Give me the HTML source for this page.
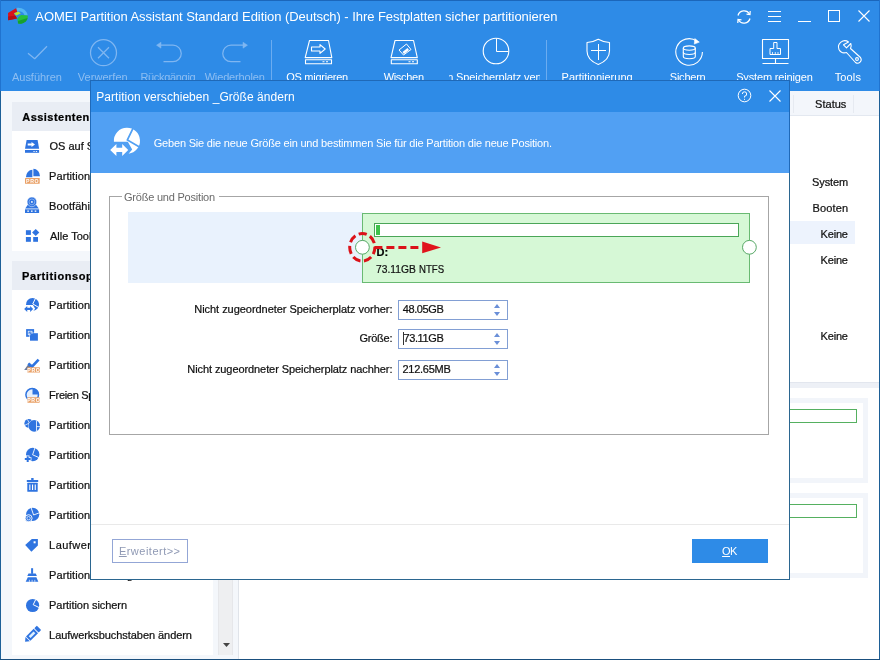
<!DOCTYPE html>
<html lang="de">
<head>
<meta charset="utf-8">
<title>AOMEI Partition Assistant Standard Edition (Deutsch)</title>
<style>
*{box-sizing:border-box;margin:0;padding:0}
html,body{width:880px;height:660px;overflow:hidden;background:#f4f7fb}
body{position:relative;font-family:"Liberation Sans",Arial,sans-serif;font-size:11px;color:#111;will-change:transform}
.abs,.t{position:absolute}
.t{white-space:nowrap}
.k{-webkit-text-stroke:0.22px}
svg{position:absolute;overflow:visible}
#top{left:0;top:0;width:880px;height:91px;background:#2e8be7}
#bl{left:0;top:0;width:1px;height:660px;background:#1d6098}
#blt{left:0;top:0;width:1px;height:91px;background:#2073cf}
#br{left:879px;top:0;width:1px;height:660px;background:#1d5f96}
#brt{left:879px;top:0;width:1px;height:91px;background:#2073cf}
#bb{left:0;top:659px;width:880px;height:1px;background:#1a4f7e}
#bt{left:0;top:0;width:880px;height:1px;background:#1b66bb}
.sep{top:40px;width:1px;height:40px;background:#6bacf0}
#side{left:12px;top:102px;width:201px;height:553px;background:#fff}
.sh{left:12px;width:201px;height:29px;background:#e9edf4}
#scroll{left:218px;top:102px;width:15px;height:553px;background:#eeeff1;border-left:1px solid #e6e7ea;border-right:1px solid #e6e7ea}
#right{left:239px;top:91px;width:640px;height:568px;background:#fff}
.dp{left:239px;width:629px;border:5px solid #f2f5fa;background:#fff}
.gb{left:239px;width:618px;height:14px;border:1px solid #55b060;background:#fff}
#dlg{left:90px;top:80px;width:700px;height:500px;background:#fff}
#dlg>.e{position:absolute;background:#2b6690}
#dt{left:1px;top:1px;width:698px;height:31px;background:#2e8be7}
#dh{left:1px;top:32px;width:698px;height:61px;background:#51a0f3}
.fi{width:110px;height:20px;border:1px solid #829fd4;background:#fff}
.up{width:0;height:0;border-left:3.5px solid transparent;border-right:3.5px solid transparent;border-bottom:4px solid #6a8fd8}
.dn{width:0;height:0;border-left:3.5px solid transparent;border-right:3.5px solid transparent;border-top:4px solid #6a8fd8}
.btn{width:76px;height:24px}
.ul{text-decoration:underline}
</style>
</head>
<body>
<div id="top" class="abs"></div>
<div id="right" class="abs"></div>
<div id="side" class="abs"></div>
<div id="scroll" class="abs"></div>

<div class="abs sh" style="top:102px"></div>
<div class="t k" style="left:22.23px;top:111px;font-size:11px;line-height:12px;height:12px;color:#000;font-weight:bold;letter-spacing:0.468px;">Assistenten</div>
<div class="abs" style="left:12px;top:251px;width:201px;height:10px;background:#f4f7fb"></div>
<div class="abs sh" style="top:261px"></div>
<div class="t k" style="left:22.06px;top:270px;font-size:11px;line-height:12px;height:12px;color:#000;font-weight:bold;letter-spacing:0.600px;">Partitionsoperationen</div>
<div class="t k" style="left:49.48px;top:140px;font-size:11px;line-height:12px;height:12px;color:#111;">OS auf SSD migrieren</div>
<div class="t k" style="left:49.10px;top:170px;font-size:11px;line-height:12px;height:12px;color:#111;letter-spacing:0.070px;">Partition-Wiederherstellung</div>
<div class="t k" style="left:49.10px;top:200px;font-size:11px;line-height:12px;height:12px;color:#111;letter-spacing:0.070px;">Bootfähiges Medium erstellen</div>
<div class="t k" style="left:49.98px;top:230px;font-size:11px;line-height:12px;height:12px;color:#111;">Alle Tools</div>
<div class="t k" style="left:49.10px;top:299px;font-size:11px;line-height:12px;height:12px;color:#111;letter-spacing:0.070px;">Partition verschieben/Größe ändern</div>
<div class="t k" style="left:49.10px;top:329px;font-size:11px;line-height:12px;height:12px;color:#111;letter-spacing:0.070px;">Partition klonen</div>
<div class="t k" style="left:49.10px;top:359px;font-size:11px;line-height:12px;height:12px;color:#111;letter-spacing:0.070px;">Partition ausrichten</div>
<div class="t k" style="left:49.10px;top:389px;font-size:11px;line-height:12px;height:12px;color:#111;letter-spacing:-0.300px;">Freien Speicherplatz verteilen</div>
<div class="t k" style="left:49.10px;top:419px;font-size:11px;line-height:12px;height:12px;color:#111;letter-spacing:0.070px;">Partition teilen</div>
<div class="t k" style="left:49.10px;top:449px;font-size:11px;line-height:12px;height:12px;color:#111;letter-spacing:0.070px;">Partition zusammenführen</div>
<div class="t k" style="left:49.10px;top:479px;font-size:11px;line-height:12px;height:12px;color:#111;letter-spacing:0.070px;">Partition löschen</div>
<div class="t k" style="left:49.10px;top:509px;font-size:11px;line-height:12px;height:12px;color:#111;letter-spacing:0.070px;">Partition formatieren</div>
<div class="t k" style="left:49.10px;top:539px;font-size:11px;line-height:12px;height:12px;color:#111;letter-spacing:0.450px;">Laufwerksbezeichnung ändern</div>
<div class="t k" style="left:49.10px;top:569px;font-size:11px;line-height:12px;height:12px;color:#111;letter-spacing:0.070px;">Partition bereinigen</div>
<div class="t k" style="left:49.10px;top:599px;font-size:11px;line-height:12px;height:12px;color:#111;letter-spacing:-0.056px;">Partition sichern</div>
<div class="t k" style="left:49.10px;top:629px;font-size:11px;line-height:12px;height:12px;color:#111;letter-spacing:-0.057px;">Laufwerksbuchstaben ändern</div>
<svg style="left:0;top:0" width="90" height="660" viewBox="0 0 90 660"><path d="M26.6 140 H37.6 L39.1 148.8 H25 Z" fill="#2f74e0"/><rect x="25" y="150" width="14.1" height="2.8" fill="#2f74e0"/><path d="M27.7 143.4 H31.5 V141.9 L35 144.4 L31.5 146.9 V145.4 H27.7 Z" fill="#fff"/><rect x="33.4" y="151" width="1.3" height="0.9" fill="#fff"/><rect x="35.8" y="151" width="1.3" height="0.9" fill="#fff"/><path d="M32.4 169.8 A6.5 7.5 0 0 0 25.9 177.3 H32.4 Z" fill="#2f74e0"/><path d="M33.4 168.8 A6.6 7.5 0 0 1 40 176.300 H33.400 Z" fill="#2f74e0"/><rect x="25" y="177.9" width="14.7" height="5.9" rx="0.6" fill="#e9a066"/><text x="32.65" y="182.80" font-size="5.2" font-weight="bold" fill="#fff" text-anchor="middle" font-family="Liberation Sans,sans-serif" letter-spacing="0.7">PRO</text><path d="M28.3 204 H35.5 L38.8 208.5 H25.2 Z" fill="#2f74e0"/><circle cx="31.9" cy="201.9" r="4.8" fill="#2f74e0" stroke="#fff" stroke-width="0.5"/><circle cx="31.9" cy="201.900" r="2.900" fill="none" stroke="#8fb6f3" stroke-width="0.800"/><circle cx="31.900" cy="201.900" r="0.900" fill="#fff"/><rect x="25" y="209.300" width="14.100" height="3.700" fill="#2f74e0"/><rect x="27.300" y="210.500" width="1.600" height="1.300" fill="#fff"/><rect x="31" y="210.500" width="1.600" height="1.300" fill="#fff"/><rect x="34.700" y="210.500" width="1.600" height="1.300" fill="#fff"/><rect x="25.900" y="230.200" width="5" height="4.700" fill="#2f74e0"/><rect x="25.900" y="237" width="5" height="4.800" fill="#2f74e0"/><rect x="33.200" y="237" width="4.800" height="4.800" fill="#2f74e0"/><path d="M35.700 228.900 L39.300 232.500 L35.700 236.100 L32.100 232.500 Z" fill="#2f74e0"/><path d="M32.50 297.90 A6.50 6.50 0 0 1 33.35 310.85 L35.15 308.70 L32.95 304.90 H26.00 A6.50 6.50 0 0 1 32.50 297.90 Z" fill="#2f74e0"/><path d="M35.60 298.10 L32.75 303.95 L38.55 307.35" stroke="#fff" stroke-width="1.00" fill="none"/><path d="M24.15 309.00 L27.25 305.95 L27.25 307.85 L30.15 307.85 L30.15 305.95 L33.15 309.00 L30.15 311.95 L30.15 310.05 L27.25 310.05 L27.25 311.95 Z" fill="#2f74e0" stroke="#fff" stroke-width="0.80" paint-order="stroke"/><rect x="26.100" y="329.100" width="8" height="7.700" fill="#2f74e0"/><rect x="30" y="333.200" width="7.900" height="7.500" fill="#2f74e0" stroke="#fff" stroke-width="1" paint-order="stroke"/><rect x="28.200" y="331.200" width="3.800" height="3.600" fill="none" stroke="#fff" stroke-width="0.700"/><rect x="30.600" y="333.800" width="3" height="2.600" fill="#2f74e0"/><path d="M24.200 370 L29 363.300 L31.500 366 L28 370 Z" fill="#6b7a99"/><path d="M28.300 363.400 L32 366.600 L38.600 359.600" stroke="#2f74e0" stroke-width="2.700" fill="none"/><rect x="27.3" y="367.3" width="12.7" height="5.3" rx="0.6" fill="#e9a066"/><text x="33.95" y="371.60" font-size="5.2" font-weight="bold" fill="#fff" text-anchor="middle" font-family="Liberation Sans,sans-serif" letter-spacing="0.7">PRO</text><circle cx="32.200" cy="394.800" r="6.300" fill="#e6f0fd" stroke="#2f74e0" stroke-width="1.500"/><path d="M32.500 388.200 A6.400 6.400 0 0 1 38.900 394.600 H32.500 Z" fill="#2f74e0"/><rect x="27.3" y="397.3" width="12.4" height="5.4" rx="0.6" fill="#e9a066"/><text x="33.80" y="401.70" font-size="5.2" font-weight="bold" fill="#fff" text-anchor="middle" font-family="Liberation Sans,sans-serif" letter-spacing="0.7">PRO</text><circle cx="28.800" cy="423.300" r="4.400" fill="#2f74e0"/><path d="M27.300 419.300 L29.400 423 L25 425.200" stroke="#fff" stroke-width="0.700" fill="none"/><circle cx="34.200" cy="425.900" r="5.800" fill="#2f74e0" stroke="#fff" stroke-width="0.900" paint-order="stroke"/><path d="M36.500 420.600 V431.300 M36.500 426.600 H40" stroke="#fff" stroke-width="0.800" fill="none"/><circle cx="32.700" cy="454.500" r="6.700" fill="#2f74e0"/><path d="M34.900 448 L32.600 454.800 L39 457.600" stroke="#fff" stroke-width="0.900" fill="none"/><path d="M26.700 456.200 H28.700 V458.100 H30.700 V460.100 H28.700 V462 H26.700 V460.100 H24.800 V458.100 H26.700 Z" fill="#2f74e0" stroke="#fff" stroke-width="1.500" paint-order="stroke"/><rect x="31.200" y="478" width="2.400" height="2" fill="#2f74e0"/><rect x="26.800" y="480" width="11.400" height="2" fill="#2f74e0"/><rect x="27.300" y="482.700" width="10.400" height="9.100" rx="0.500" fill="#2f74e0"/><rect x="29.300" y="484.500" width="1.100" height="5.500" fill="#fff"/><rect x="32" y="484.500" width="1.100" height="5.500" fill="#fff"/><rect x="34.700" y="484.500" width="1.100" height="5.500" fill="#fff"/><circle cx="32.700" cy="514.300" r="6.600" fill="#2f74e0"/><path d="M31.200 508 L33.600 515 L39.300 512.800" stroke="#fff" stroke-width="0.900" fill="none"/><circle cx="28.600" cy="518.200" r="3.500" fill="#2f74e0" stroke="#fff" stroke-width="0.900"/><circle cx="28.600" cy="518.200" r="1.700" fill="none" stroke="#fff" stroke-width="0.700"/><path d="M25.200 545 L31.800 539.100 H37.900 V545.500 L31.400 551.800 Z" fill="#2f74e0"/><rect x="33.600" y="541.300" width="2" height="2" fill="#fff"/><rect x="31.100" y="568.200" width="2" height="5.600" fill="#2f74e0"/><path d="M27.300 576 L28.500 573.600 H35.700 L36.900 576 Z" fill="#2f74e0"/><path d="M27.800 577.200 H36.400 L38.300 581.800 H25.700 Z" fill="#2f74e0"/><path d="M29.400 579.800 V581.800 M32.100 579.800 V581.800 M34.800 579.800 V581.800" stroke="#fff" stroke-width="0.700"/><circle cx="32.600" cy="605.500" r="6.600" fill="#2f74e0"/><path d="M35.700 599.600 L33.200 604.700 L39 607.500" stroke="#fff" stroke-width="1" fill="none"/><g transform="translate(25.100 641.700) rotate(-45)"><path d="M0 0 L3.600 -3.100 V3.100 Z" fill="#2f74e0"/><rect x="4.400" y="-3.100" width="10.800" height="6.200" fill="#2f74e0"/><rect x="6.400" y="-1.300" width="6.800" height="2.600" fill="#dcefff"/><rect x="16" y="-3.100" width="3.700" height="6.200" rx="0.800" fill="#2f74e0"/></g></svg>
<svg style="left:223px;top:643px" width="7" height="4" viewBox="0 0 7 4"><path d="M0 0 H7 L3.5 4 Z" fill="#444"/></svg>
<div class="abs" style="left:238px;top:91px;width:1px;height:568px;background:#e0e4ea"></div>
<div class="abs" style="left:239px;top:91px;width:640px;height:25px;background:#f3f6fb;border-bottom:1px solid #e3e8f0"></div>
<div class="abs" style="left:793px;top:95px;width:1px;height:18px;background:#e6eaf1"></div>
<div class="abs" style="left:853px;top:95px;width:1px;height:18px;background:#e6eaf1"></div>
<div class="t k" style="left:815.10px;top:98px;font-size:11px;line-height:12px;height:12px;color:#111;letter-spacing:0.016px;">Status</div>
<div class="abs" style="left:790px;top:221px;width:65px;height:23px;background:#edf3fd"></div>
<div class="t k" style="left:812.00px;top:176px;font-size:11px;line-height:12px;height:12px;color:#111;letter-spacing:-0.093px;">System</div>
<div class="t k" style="left:812.60px;top:202px;font-size:11px;line-height:12px;height:12px;color:#111;letter-spacing:0.142px;">Booten</div>
<div class="t k" style="left:820.60px;top:228px;font-size:11px;line-height:12px;height:12px;color:#111;letter-spacing:-0.191px;">Keine</div>
<div class="t k" style="left:820.60px;top:254px;font-size:11px;line-height:12px;height:12px;color:#111;letter-spacing:-0.191px;">Keine</div>
<div class="t k" style="left:820.60px;top:330px;font-size:11px;line-height:12px;height:12px;color:#111;letter-spacing:-0.191px;">Keine</div>
<div class="abs" style="left:239px;top:382px;width:640px;height:6px;background:#edf0f6;border-top:1px solid #e2e6ee"></div>
<div class="abs dp" style="top:398px;height:85px"></div>
<div class="abs gb" style="top:409px"></div>
<div class="abs dp" style="top:493px;height:85px"></div>
<div class="abs gb" style="top:504px"></div>
<svg style="left:0;top:0" width="32" height="28" viewBox="0 0 32 28">
<path d="M8 13 L16.4 8 L17.2 12 L13.8 13.6 L17 18.4 L8.3 20.2 Z" fill="#d8141a"/>
<path d="M8 16.500 L15.500 15.800 L17 18.400 L8.300 20.200 Z" fill="#b40f14"/>
<path d="M16.400 8.100 C21 7 27.200 10 27.700 15.600 L24.500 15.200 C23.500 12.200 20.500 10.600 17.100 11.600 Z" fill="#52b6f2"/>
<path d="M14 13.200 L18.500 11.400 L20.800 13.400 L16.200 15.400 Z" fill="#b9e232"/>
<path d="M17.300 18.600 L20.800 15 L27.800 15.600 C28.500 20 24 24.600 18 23.600 Z" fill="#25c03e"/>
<path d="M18 21 L27.500 18 C27 21.500 23 24.500 18 23.600 Z" fill="#17a02e"/>
</svg>
<div class="t" style="left:35.27px;top:9px;font-size:13px;line-height:15px;height:15px;color:#fff;letter-spacing:-0.058px;">AOMEI Partition Assistant Standard Edition (Deutsch) - Ihre Festplatten sicher partitionieren</div>
<svg style="left:735px;top:8px" width="18" height="18" viewBox="0 0 18 18" fill="none" stroke="#fff" stroke-width="1.3">
<path d="M3 7.500 A6.300 6.300 0 0 1 14.500 6"/><path d="M15 10.500 A6.300 6.300 0 0 1 3.500 12"/>
<path d="M11.500 6.200 L15 6.500 L15.200 3" stroke-width="1.200"/><path d="M6.500 11.800 L3 11.500 L2.800 15" stroke-width="1.200"/>
</svg>
<svg style="left:768px;top:10px" width="13" height="13" viewBox="0 0 13 13" stroke="#fff" stroke-width="1" shape-rendering="crispEdges"><path d="M0 1.500H13M0 6.500H13M0 11.500H13"/></svg>
<svg style="left:798px;top:20px" width="13" height="2" viewBox="0 0 13 2" stroke="#fff" stroke-width="1" shape-rendering="crispEdges"><path d="M0 1.500H13"/></svg>
<svg style="left:828px;top:10px" width="12" height="12" viewBox="0 0 12 12" fill="none" stroke="#fff" stroke-width="1" shape-rendering="crispEdges"><rect x="0.500" y="0.500" width="11" height="11"/></svg>
<svg style="left:858px;top:10px" width="12" height="12" viewBox="0 0 12 12" fill="none" stroke="#fff" stroke-width="1.100"><path d="M0.500 0.500L11.500 11.500M11.500 0.500L0.500 11.500"/></svg>
<svg style="left:0;top:36px" width="880" height="32" viewBox="0 36 880 32" fill="none" stroke="#fff" stroke-width="1.1" stroke-linejoin="round">
<g stroke="#7fb6f1" stroke-width="1.25" transform="translate(0.5 0.2)">
<path d="M27.5 53 L34.2 58.5 L46.5 46"/>
<circle cx="103" cy="52.5" r="13"/><path d="M97.500 47 L108.500 58 M108.500 47 L97.500 58"/>
<path d="M163 61.500 H172.500 A8.250 8.250 0 0 0 172.500 45 H159"/><path d="M160.500 42 L156 45 L160.500 48 Z" fill="#7fb6f1" stroke-width="0.500"/>
<path d="M240 61.500 H230.500 A8.250 8.250 0 0 1 230.500 45 H244"/><path d="M242.500 42 L247 45 L242.500 48 Z" fill="#7fb6f1" stroke-width="0.500"/>
</g>
<g>
<path d="M309.500 40.500 H328.500 L331.800 57.600 H305.200 Z"/><rect x="305.500" y="59.700" width="26" height="4"/>
<path d="M322.500 61.700 H324.500 M326 61.700 H328" />
<path d="M311.500 47 H320 V44.600 L325.200 49 L320 53.400 V51 H311.500 Z" stroke-width="1.1"/>
</g>
<g>
<path d="M395 40.500 H413.500 L417.300 57.600 H391 Z"/><rect x="391.300" y="59.700" width="26" height="4"/>
<path d="M408.500 61.700 H410.500 M412 61.700 H414"/>
<path d="M399 50 L406.500 44 L411 49.500 L403.500 55 Z" stroke-width="1"/><path d="M402.500 52 L407.500 48 L409 50 L404 54 Z" fill="#fff" stroke="none"/>
</g>
<g><circle cx="496" cy="51" r="12.800"/><path d="M496.500 38.500 V51.500 H508.500" stroke-width="1"/></g>
<g><path d="M598.300 39.300 C594.500 41.500 591 42.300 587 42.500 V51 C587 57.500 592 62 598.300 64.500 C604.500 62 609.500 57.500 609.500 51 V42.500 C605.500 42.300 602 41.500 598.300 39.300 Z"/>
<path d="M598.500 44 V60 M591 50.500 H606" stroke-width="1"/></g>
<g transform="translate(0.8 0.6)"><path d="M696 40.500 A13.300 13.300 0 1 0 701.600 51.500"/><path d="M694 38 L698.500 41.500 L693.500 43.500 Z" fill="#fff" stroke-width="0.600"/>
<ellipse cx="688.500" cy="47.500" rx="6" ry="2.200"/><path d="M682.500 47.500 V56 A6 2.200 0 0 0 694.500 56 V47.500"/><path d="M682.500 51.700 A6 2.200 0 0 0 694.500 51.700"/></g>
<g><rect x="762.500" y="39.500" width="26" height="19"/><path d="M775.500 58.500 V63.500 M762.500 63.500 H788.500"/>
<path d="M773.700 42.500 H777 V48.500 H780.500 V54.500 H770 V48.500 H773.700 Z" stroke-width="1"/><path d="M772.500 52 V54.500 M775.300 52 V54.500 M778 52 V54.500" stroke-width="0.800"/></g>
<g><path d="M848.500 42 A6.300 6.300 0 0 0 839 49.500 A6.300 6.300 0 0 0 846.500 52.500 L855.500 62.500 A3.600 3.600 0 0 0 860.500 57.500 L850.500 48.500 A6.300 6.300 0 0 0 850.800 43.500 L846.500 47.800 L843.500 44.800 L848.500 42 Z"/><circle cx="857" cy="59" r="1.400"/></g>
</svg>
<div class="abs sep" style="left:271px"></div>
<div class="abs sep" style="left:546px"></div>
<div class="t" style="left:11.98px;top:71px;font-size:11px;line-height:12px;height:12px;color:#8dbef2;letter-spacing:-0.019px;">Ausführen</div>
<div class="t" style="left:77.75px;top:71px;font-size:11px;line-height:12px;height:12px;color:#8dbef2;letter-spacing:0.052px;">Verwerfen</div>
<div class="t" style="left:140.40px;top:71px;font-size:11px;line-height:12px;height:12px;color:#8dbef2;letter-spacing:-0.313px;">Rückgängig</div>
<div class="t" style="left:204.65px;top:71px;font-size:11px;line-height:12px;height:12px;color:#8dbef2;letter-spacing:-0.152px;">Wiederholen</div>
<div class="t" style="left:286.18px;top:71px;font-size:11px;line-height:12px;height:12px;color:#fff;letter-spacing:-0.252px;">OS migrieren</div>
<div class="t" style="left:383.65px;top:71px;font-size:11px;line-height:12px;height:12px;color:#fff;letter-spacing:-0.304px;">Wischen</div>
<div class="abs" style="left:449px;top:68px;width:91px;height:16px;overflow:hidden"><div class="t" style="left:-26.31px;top:3px;font-size:11px;line-height:12px;height:12px;color:#fff;letter-spacing:-0.12px;">Freien Speicherplatz verteilen</div></div>
<div class="t" style="left:561.60px;top:71px;font-size:11px;line-height:12px;height:12px;color:#fff;letter-spacing:0.010px;">Partitionierung</div>
<div class="t" style="left:669.80px;top:71px;font-size:11px;line-height:12px;height:12px;color:#fff;letter-spacing:-0.233px;">Sichern</div>
<div class="t" style="left:736.20px;top:71px;font-size:11px;line-height:12px;height:12px;color:#fff;letter-spacing:-0.157px;">System reinigen</div>
<div class="t" style="left:834.75px;top:71px;font-size:11px;line-height:12px;height:12px;color:#fff;letter-spacing:0.114px;">Tools</div>
<div id="dlg" class="abs">
<div id="dt" class="abs"></div><div id="dh" class="abs"></div>
<div class="e" style="left:0;top:0;width:700px;height:1px;background:#1f69b8"></div>
<div class="e" style="left:0;top:0;width:1px;height:93px;background:#1f69b8"></div>
<div class="e" style="left:699px;top:0;width:1px;height:93px;background:#1f69b8"></div>
<div class="e" style="left:0;top:93px;width:1px;height:407px"></div>
<div class="e" style="left:699px;top:93px;width:1px;height:407px"></div>
<div class="e" style="left:0;top:499px;width:700px;height:1px"></div>
<div class="t" style="left:6.22px;top:10px;font-size:12px;line-height:14px;height:14px;color:#fff;letter-spacing:0.048px;">Partition verschieben _Größe ändern</div>
<svg style="left:647px;top:8px" width="15" height="15" viewBox="0 0 15 15" fill="none" stroke="#fff" stroke-width="1"><circle cx="7.5" cy="7.5" r="6.3"/><path d="M5.300 6 A2.200 2.200 0 1 1 7.500 8.200 V9.500"/><path d="M7.500 10.800 V11.800"/></svg>
<svg style="left:678.600px;top:9.500px" width="12" height="12" viewBox="0 0 12 12" fill="none" stroke="#fff" stroke-width="1.100"><path d="M0.500 0.500L11.500 11.500M11.500 0.500L0.500 11.500"/></svg>
<svg style="left:0;top:0" width="80" height="100" viewBox="90 80 80 100"><path d="M126.90 127.80 A13.00 13.00 0 0 1 128.60 153.70 L132.20 149.40 L127.80 141.80 H113.90 A13.00 13.00 0 0 1 126.90 127.80 Z" fill="#fff"/><path d="M133.10 128.20 L127.40 139.90 L139.00 146.70" stroke="#51a0f3" stroke-width="1.75" fill="none"/><path d="M110.20 150.00 L116.40 143.90 L116.40 147.70 L122.20 147.70 L122.20 143.90 L128.20 150.00 L122.20 155.90 L122.20 152.10 L116.40 152.10 L116.40 155.90 Z" fill="#fff" stroke="#51a0f3" stroke-width="1.60" paint-order="stroke"/></svg>
<div class="t" style="left:63.75px;top:57px;font-size:11px;line-height:12px;height:12px;color:#fff;letter-spacing:-0.192px;">Geben Sie die neue Größe ein und bestimmen Sie für die Partition die neue Position.</div>
<div class="abs" style="left:19px;top:116px;width:660px;height:239px;border:1px solid #a6a6a6"></div>
<div class="abs" style="left:32px;top:110px;width:97px;height:14px;background:#fff"></div>
<div class="t" style="left:33.95px;top:111px;font-size:11px;line-height:12px;height:12px;color:#6a6a6a;letter-spacing:-0.210px;">Größe und Position</div>
<div class="abs" style="left:38px;top:132px;width:235px;height:71px;background:#e9f2fd"></div>
<div class="abs" style="left:272px;top:133px;width:388px;height:70px;background:#d6f8d6;border:1px solid #69ba72"></div>
<div class="abs" style="left:284px;top:143px;width:365px;height:14px;background:#fff;border:1px solid #4aa657"></div>
<div class="abs" style="left:286px;top:145px;width:4px;height:10px;background:#3fc24a"></div>
<div class="t k" style="left:286.46px;top:166px;font-size:11px;line-height:12px;height:12px;color:#000;font-weight:bold;letter-spacing:0.200px;">D:</div>
<div class="t k" style="left:286.07px;top:183px;font-size:11px;line-height:12px;height:12px;color:#111;transform:scaleX(0.9347);transform-origin:0 0;">73.11GB</div>
<div class="t k" style="left:329.41px;top:183px;font-size:11px;line-height:12px;height:12px;color:#111;transform:scaleX(0.8751);transform-origin:0 0;">NTFS</div>
<svg style="left:0;top:0" width="700" height="300" viewBox="90 80 700 300"><circle cx="362.4" cy="247.3" r="6.9" fill="#fff" stroke="#57a866" stroke-width="1"/><ellipse cx="362.3" cy="247.3" rx="12.600" ry="13.800" fill="none" stroke="#db1219" stroke-width="3" stroke-dasharray="8.200 3.670" stroke-dashoffset="1.200"/><path d="M374.400 247.400 H420" stroke="#db1219" stroke-width="3" stroke-dasharray="8 4"/><path d="M422.200 241.600 L441 247.400 L422.200 253.200 Z" fill="#e0141c"/><circle cx="749.400" cy="247.300" r="6.900" fill="#fff" stroke="#57a866" stroke-width="1"/></svg>
<div class="t k" style="left:104.30px;top:223px;font-size:11px;line-height:12px;height:12px;color:#111;letter-spacing:-0.045px;">Nicht zugeordneter Speicherplatz vorher:</div>
<div class="abs fi" style="left:308px;top:220px"></div>
<div class="t k" style="left:312.75px;top:223px;font-size:11px;line-height:12px;height:12px;color:#111;letter-spacing:-0.406px;">48.05GB</div>
<div class="abs up" style="left:404px;top:224px"></div><div class="abs dn" style="left:404px;top:232px"></div>
<div class="t k" style="left:269.45px;top:252px;font-size:11px;line-height:12px;height:12px;color:#111;letter-spacing:-0.218px;">Größe:</div>
<div class="abs fi" style="left:308px;top:249px"></div>
<div class="t k" style="left:313.44px;top:252px;font-size:11px;line-height:12px;height:12px;color:#111;letter-spacing:-0.385px;">73.11GB</div>
<div class="abs up" style="left:404px;top:253px"></div><div class="abs dn" style="left:404px;top:261px"></div>
<div class="t k" style="left:97.30px;top:283px;font-size:11px;line-height:12px;height:12px;color:#111;letter-spacing:-0.084px;">Nicht zugeordneter Speicherplatz nachher:</div>
<div class="abs fi" style="left:308px;top:280px"></div>
<div class="t k" style="left:312.45px;top:283px;font-size:11px;line-height:12px;height:12px;color:#111;letter-spacing:-0.265px;">212.65MB</div>
<div class="abs up" style="left:404px;top:284px"></div><div class="abs dn" style="left:404px;top:292px"></div>
<div class="abs" style="left:313px;top:252px;width:1px;height:13px;background:#333"></div>
<div class="abs" style="left:1px;top:444px;width:698px;height:1px;background:#e9e9e9"></div>
<div class="abs btn" style="left:22px;top:459px;border:1px solid #93a6d6"></div>
<div class="t" style="left:28.90px;top:465px;font-size:11px;line-height:12px;height:12px;color:#8f99b4;letter-spacing:0.489px;"><span class="ul">E</span>rweitert&gt;&gt;</div>
<div class="abs btn" style="left:602px;top:459px;background:#2e8be7"></div>
<div class="t" style="left:632.08px;top:465px;font-size:11px;line-height:12px;height:12px;color:#fff;letter-spacing:-0.600px;"><span class="ul">O</span>K</div>
</div>
<div id="bt" class="abs"></div>
<div id="bl" class="abs"></div><div id="blt" class="abs"></div>
<div id="br" class="abs"></div><div id="brt" class="abs"></div>
<div id="bb" class="abs"></div>
</body>
</html>
